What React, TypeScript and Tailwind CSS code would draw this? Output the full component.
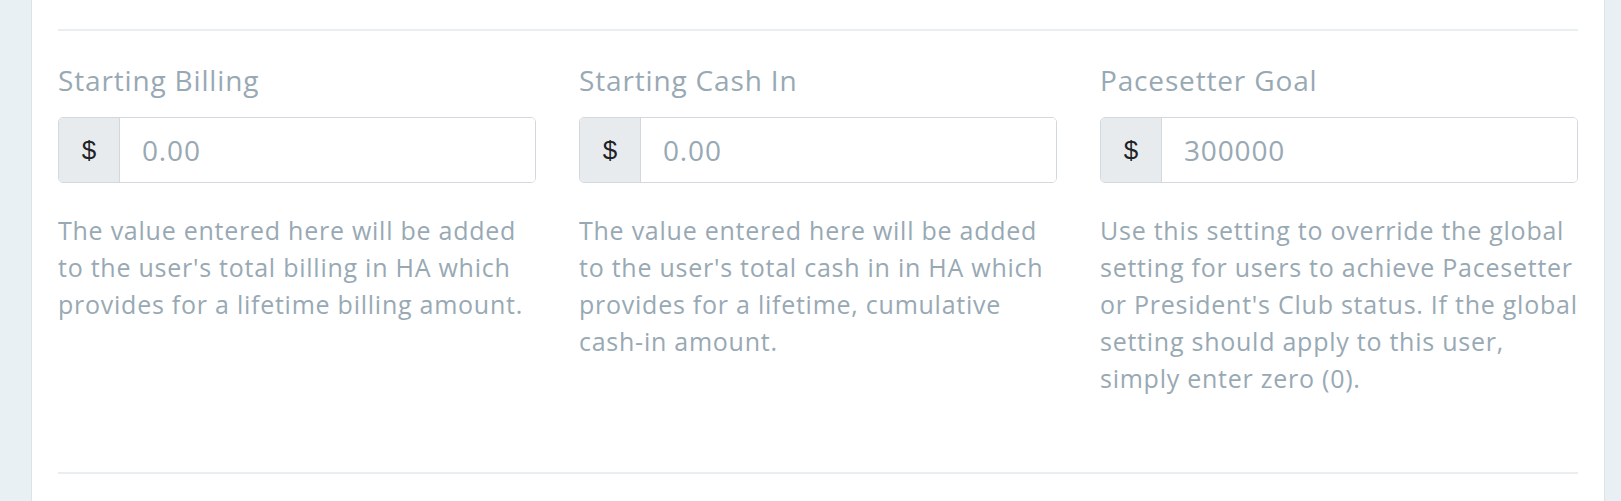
import React from "react";

const cols = [
  {
    label: "Starting Billing",
    placeholder: "0.00",
    help: "The value entered here will be added to the user's total billing in HA which provides for a lifetime billing amount.",
  },
  {
    label: "Starting Cash In",
    placeholder: "0.00",
    help: "The value entered here will be added to the user's total cash in in HA which provides for a lifetime, cumulative cash-in amount.",
  },
  {
    label: "Pacesetter Goal",
    placeholder: "300000",
    help: "Use this setting to override the global setting for users to achieve Pacesetter or President's Club status. If the global setting should apply to this user, simply enter zero (0).",
  },
];

export default function App() {
  return (
    <div className="w-[1621px] h-[501px] bg-[#e8f0f3] flex overflow-hidden" style={{ fontFamily: '"Open Sans", sans-serif' }}>
      <div className="ml-[31px] w-[1574px] h-full bg-white border-x border-[#dbe4e9] px-[26px] pt-[29px]">
        <div className="h-[2px] bg-[#e9eef1]" />
        <div className="grid grid-cols-3 gap-x-[43px] pt-[32px]">
          {cols.map((c) => (
            <div key={c.label} className="flex flex-col">
              <div className="text-[28px] leading-[34px] tracking-[0.03em] text-[#98a9b4]">{c.label}</div>
              <div className="mt-[20px] flex h-[66px] rounded-[5px] border border-[#d2d9de] overflow-hidden">
                <div className="w-[61px] shrink-0 bg-[#e8ebee] border-r border-[#d2d9de] flex items-center justify-center text-[26px] text-[#1e2226]" style={{ fontFamily: '"Liberation Sans", Arial, sans-serif' }}>
                  $
                </div>
                <input
                  className="flex-1 min-w-0 pl-[22px] text-[28px] tracking-[0.03em] outline-none placeholder:text-[#98a9b4] bg-white"
                  placeholder={c.placeholder}
                />
              </div>
              <p className="mt-[29px] text-[25px] leading-[37px] tracking-[0.03em] text-[#98a9b4]">{c.help}</p>
            </div>
          ))}
        </div>
        <div className="h-[2px] bg-[#e9eef1] mt-[75px]" />
      </div>
    </div>
  );
}
